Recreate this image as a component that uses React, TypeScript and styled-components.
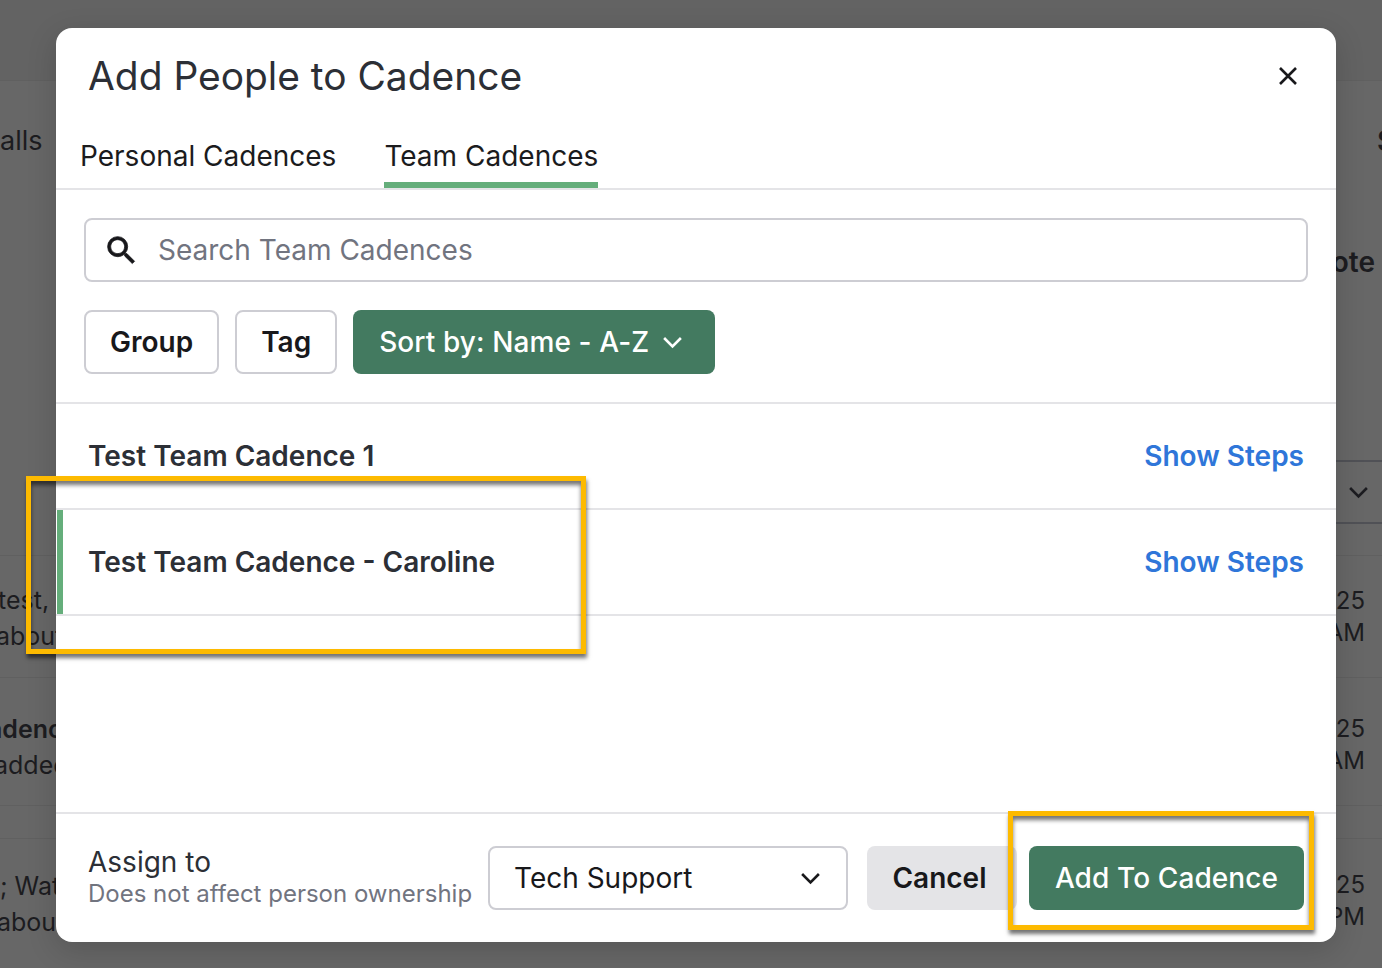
import React from "react";
import styled, { createGlobalStyle } from "styled-components";

const GlobalStyle = createGlobalStyle`
  html, body {
    margin: 0;
    padding: 0;
    background: #666666;
  }
  * {
    box-sizing: border-box;
  }
`;

const Page = styled.div`
  position: relative;
  width: 1382px;
  height: 968px;
  overflow: hidden;
  font-family: Inter, "Noto Sans", sans-serif;
  background: linear-gradient(180deg, #636363 0, #636363 80px, #676767 80px, #676767 100%);
  display: flex;
  justify-content: space-between;
`;

/* page behind the dialog, only the edges show */
const BackColumn = styled.div<{ $width: number; $size: number; $leading: number }>`
  width: ${({ $width }) => $width}px;
  padding-top: 80px;
  display: flex;
  flex-direction: column;
  overflow: hidden;
  font-size: ${({ $size }) => $size}px;
  line-height: ${({ $leading }) => $leading}px;
  color: #1c1c20;
`;

const BackRow = styled.div<{
  $height: number;
  $line?: boolean;
  $strong?: boolean;
  $end?: boolean;
  $top?: number;
  $right?: number;
}>`
  height: ${({ $height }) => $height}px;
  flex: none;
  display: flex;
  flex-direction: column;
  justify-content: center;
  align-items: ${({ $end }) => ($end ? "flex-end" : "flex-start")};
  padding: ${({ $top }) => $top || 0}px ${({ $right }) => $right || 0}px 0 0;
  border-top: ${({ $line, $strong }) =>
    $strong ? "2px solid #505156" : $line ? "1px solid #606060" : "0"};
  white-space: nowrap;
`;

const BackText = styled.span<{ $shift?: number; $bold?: boolean; $size?: number }>`
  margin-left: ${({ $shift }) => $shift || 0}px;
  font-weight: ${({ $bold }) => ($bold ? 600 : 400)};
  font-size: ${({ $size }) => ($size ? `${$size}px` : "inherit")};
`;

const Modal = styled.div`
  position: absolute;
  left: 56px;
  top: 28px;
  width: 1280px;
  height: 914px;
  background: #fff;
  border-radius: 16px;
  box-shadow: 0 8px 30px rgba(0, 0, 0, 0.16);
  display: flex;
  flex-direction: column;
  overflow: hidden;
  color: #2c2f36;
`;

const Header = styled.header`
  height: 162px;
  flex: none;
  border-bottom: 2px solid #e4e4e7;
  display: flex;
  flex-direction: column;
  justify-content: space-between;
`;

const TitleRow = styled.div`
  display: flex;
  align-items: center;
  justify-content: space-between;
  padding: 21px 32px 0 32px;
`;

const Title = styled.h2`
  margin: 0;
  font-size: 38.9px;
  line-height: 54px;
  font-weight: 400;
`;

const CloseButton = styled.button`
  border: 0;
  padding: 0;
  background: none;
  width: 32px;
  height: 32px;
  color: #18181b;
  display: flex;
  align-items: center;
  justify-content: center;
`;

const Tabs = styled.div`
  display: flex;
  gap: 48px;
  padding-left: 24px;
`;

const Tab = styled.div<{ $active?: boolean }>`
  font-size: 28px;
  line-height: 36px;
  padding-bottom: 8px;
  color: #1b1b1d;
  border-bottom: 6px solid ${({ $active }) => ($active ? "#65ae7b" : "transparent")};
`;

const Filters = styled.section`
  height: 214px;
  flex: none;
  padding: 28px 28px 0;
  border-bottom: 2px solid #e4e4e7;
  display: flex;
  flex-direction: column;
  gap: 28px;
`;

const SearchBox = styled.div`
  height: 64px;
  border: 2px solid #cdcdd3;
  border-radius: 8px;
  display: flex;
  align-items: center;
  gap: 18px;
  padding-left: 17px;
`;

const SearchText = styled.span`
  font-size: 28px;
  color: #71747f;
`;

const FilterRow = styled.div`
  display: flex;
  gap: 16px;
`;

const OutlineButton = styled.button`
  height: 64px;
  padding: 0 24px;
  background: #fff;
  border: 2px solid #cdcdd3;
  border-radius: 8px;
  font: 600 28px Inter, sans-serif;
  color: #18181b;
`;

const GreenButton = styled.button`
  height: 64px;
  padding: 0 27px 0 26px;
  background: #437a60;
  border: 0;
  border-radius: 8px;
  font: 500 28px Inter, sans-serif;
  letter-spacing: 0.1px;
  color: #fff;
  display: flex;
  align-items: center;
  gap: 8px;
`;

const List = styled.div`
  flex: 1;
  display: flex;
  flex-direction: column;
`;

const Row = styled.div<{ $selected?: boolean }>`
  position: relative;
  height: 106px;
  flex: none;
  padding: 0 32px 0 32px;
  border-bottom: 2px solid #e4e4e7;
  display: flex;
  align-items: center;
  justify-content: space-between;

  &::before {
    content: "";
    display: ${({ $selected }) => ($selected ? "block" : "none")};
    position: absolute;
    left: 1px;
    top: 0;
    bottom: 0;
    width: 6px;
    background: #65ae7b;
  }
`;

const RowName = styled.span`
  font-size: 28px;
  font-weight: 600;
  color: #2c2f36;
`;

const RowLink = styled.a`
  font-size: 28px;
  font-weight: 600;
  color: #2f76d9;
`;

const Footer = styled.footer`
  height: 130px;
  flex: none;
  border-top: 2px solid #e4e4e7;
  display: flex;
  align-items: center;
  padding: 0 32px;
`;

const AssignLabel = styled.div`
  display: flex;
  flex-direction: column;
  width: 400px;
  flex: none;
  font-size: 28px;
  line-height: 31px;
  white-space: nowrap;
`;

const AssignHint = styled.span`
  font-size: 24px;
  line-height: 31px;
  color: #71747f;
`;

const Select = styled.div`
  width: 360px;
  flex: none;
  height: 64px;
  border: 2px solid #cdcdd3;
  border-radius: 8px;
  padding: 0 20px 0 24px;
  display: flex;
  align-items: center;
  justify-content: space-between;
  font-size: 28px;
  color: #18181b;
`;

const CancelButton = styled.button`
  width: 150px;
  flex: none;
  height: 64px;
  margin-left: 19px;
  padding: 0 5px 0 0;
  background: #e4e4e7;
  border: 0;
  border-radius: 8px;
  font: 600 28px Inter, sans-serif;
  color: #18181b;
`;

const SubmitButton = styled(GreenButton)`
  margin-left: auto;
  width: 275px;
  justify-content: center;
  padding: 0;
`;

const Highlight = styled.div<{ $x: number; $y: number; $w: number; $h: number }>`
  position: absolute;
  left: ${({ $x }) => $x}px;
  top: ${({ $y }) => $y}px;
  width: ${({ $w }) => $w}px;
  height: ${({ $h }) => $h}px;
  border: 5px solid #fdba00;
  box-shadow: 1px 4px 4px rgba(0, 0, 0, 0.55), inset 0 4px 4px rgba(0, 0, 0, 0.55);
  pointer-events: none;
`;

const Chevron = ({ size = 31 }: { size?: number }) => (
  <svg width={size} height={size} viewBox="0 0 24 24" fill="none" stroke="currentColor" strokeWidth="2">
    <path d="M5.5 8.5 12 15l6.5-6.5" />
  </svg>
);

export default function App() {
  return (
    <Page>
      <GlobalStyle />

      <BackColumn $width={70} $size={25} $leading={36}>
        <BackRow $height={120} $line>
          <BackText $size={27}>alls</BackText>
        </BackRow>
        <BackRow $height={355} />
        <BackRow $height={122} $line $top={3}>
          <BackText $shift={-2}>test,</BackText>
          <BackText $shift={-4}>about</BackText>
        </BackRow>
        <BackRow $height={128} $line $top={11}>
          <BackText $shift={-12} $bold>adence</BackText>
          <BackText $shift={-6}>added</BackText>
        </BackRow>
        <BackRow $height={33} $line />
        <BackRow $height={130} $line>
          <BackText>; Wat</BackText>
          <BackText $shift={-3}>about</BackText>
        </BackRow>
      </BackColumn>

      <BackColumn $width={46} $size={24} $leading={32}>
        <BackRow $height={120} $line>
          <BackText $shift={41} $bold $size={28}>S</BackText>
        </BackRow>
        <BackRow $height={124} $end $right={7}>
          <BackText $bold $size={28}>ote</BackText>
        </BackRow>
        <BackRow $height={136} />
        <BackRow $height={62} $strong $end $right={8}>
          <Chevron />
        </BackRow>
        <BackRow $height={33} $strong />
        <BackRow $height={122} $line $end $right={17}>
          <BackText>25</BackText>
          <BackText>AM</BackText>
        </BackRow>
        <BackRow $height={128} $line $end $right={17} $top={7}>
          <BackText>25</BackText>
          <BackText>AM</BackText>
        </BackRow>
        <BackRow $height={33} $line />
        <BackRow $height={124} $line $end $right={17}>
          <BackText>25</BackText>
          <BackText>PM</BackText>
        </BackRow>
      </BackColumn>

      <Modal>
        <Header>
          <TitleRow>
            <Title>Add People to Cadence</Title>
            <CloseButton aria-label="Close">
              <svg width="20" height="20" viewBox="0 0 20 20" fill="none" stroke="currentColor" strokeWidth="2.6">
                <path d="M2 2l16 16M18 2 2 18" />
              </svg>
            </CloseButton>
          </TitleRow>
          <Tabs>
            <Tab>Personal Cadences</Tab>
            <Tab $active>Team Cadences</Tab>
          </Tabs>
        </Header>

        <Filters>
          <SearchBox>
            <svg width="37" height="37" viewBox="0 0 24 24" fill="#18181b" stroke="#18181b" strokeWidth="0.5">
              <path d="M15.5 14h-.79l-.28-.27A6.471 6.471 0 0 0 16 9.5 6.5 6.5 0 1 0 9.5 16c1.61 0 3.09-.59 4.23-1.57l.27.28v.79l5 4.99L20.49 19l-4.99-5zm-6 0C7.01 14 5 11.99 5 9.5S7.01 5 9.5 5 14 7.01 14 9.5 11.99 14 9.5 14z" />
            </svg>
            <SearchText>Search Team Cadences</SearchText>
          </SearchBox>
          <FilterRow>
            <OutlineButton>Group</OutlineButton>
            <OutlineButton>Tag</OutlineButton>
            <GreenButton>
              Sort by: Name - A-Z
              <Chevron />
            </GreenButton>
          </FilterRow>
        </Filters>

        <List>
          <Row>
            <RowName>Test Team Cadence 1</RowName>
            <RowLink>Show Steps</RowLink>
          </Row>
          <Row $selected>
            <RowName>Test Team Cadence - Caroline</RowName>
            <RowLink>Show Steps</RowLink>
          </Row>
        </List>

        <Footer>
          <AssignLabel>
            Assign to
            <AssignHint>Does not affect person ownership</AssignHint>
          </AssignLabel>
          <Select>
            Tech Support
            <Chevron />
          </Select>
          <CancelButton>Cancel</CancelButton>
          <SubmitButton>Add To Cadence</SubmitButton>
        </Footer>
      </Modal>

      <Highlight $x={26} $y={476} $w={560} $h={178} />
      <Highlight $x={1008} $y={811} $w={306} $h={119} />
    </Page>
  );
}
